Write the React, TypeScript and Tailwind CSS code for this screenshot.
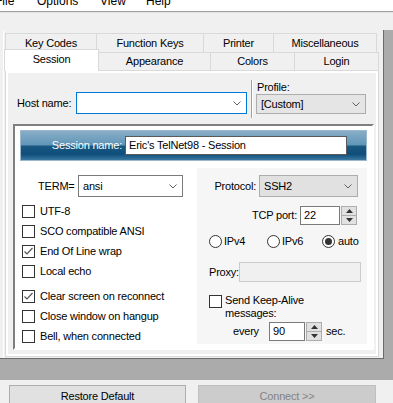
import React from "react";

function Chevron() {
  return (
    <svg width="8" height="5" viewBox="0 0 8 5" className="shrink-0">
      <path d="M0.5 0.5 L4 4 L7.5 0.5" fill="none" stroke="#606060" strokeWidth="1" />
    </svg>
  );
}

function Spinner() {
  return (
    <div className="w-[16px] h-full ml-[1px] flex flex-col border border-[#adadad] bg-[#e1e1e1]">
      <div className="flex-1 flex items-center justify-center border-b border-[#adadad]">
        <svg width="7" height="4" viewBox="0 0 7 4">
          <path d="M0 4 L3.5 0 L7 4 Z" fill="#333" />
        </svg>
      </div>
      <div className="flex-1 flex items-center justify-center">
        <svg width="7" height="4" viewBox="0 0 7 4">
          <path d="M0 0 L3.5 4 L7 0 Z" fill="#333" />
        </svg>
      </div>
    </div>
  );
}

function Check({ on }: { on?: boolean }) {
  return (
    <div className="w-[13px] h-[13px] shrink-0 border border-[#333] bg-white flex items-center justify-center">
      {on && (
        <svg width="11" height="11" viewBox="0 0 11 11">
          <path d="M1.5 5.5 L4 8 L9.5 2" fill="none" stroke="#555" strokeWidth="1.2" />
        </svg>
      )}
    </div>
  );
}

function Radio({ on }: { on?: boolean }) {
  return (
    <div className="w-[13px] h-[13px] shrink-0 rounded-full border border-[#333] bg-white flex items-center justify-center">
      {on && <div className="w-[7px] h-[7px] rounded-full bg-[#333]" />}
    </div>
  );
}

function CheckRow({ label, on }: { label: string; on?: boolean }) {
  return (
    <div className="h-[20px] flex items-center pl-[2px] gap-[5px]">
      <Check on={on} />
      <span>{label}</span>
    </div>
  );
}

export default function App() {
  return (
    <div className="w-[393px] h-[403px] overflow-hidden bg-[#f0f0f0] text-[11px] tracking-[-0.2px] text-black font-['Liberation_Sans',Arial,sans-serif] flex flex-col">
      {/* menu bar, cut off at the top */}
      <div className="h-[11px] bg-white overflow-hidden shrink-0">
        <div className="flex -mt-[5px] text-[12px] leading-[12px] tracking-normal whitespace-nowrap">
          <span className="-ml-[5px] w-[42px] shrink-0">File</span>
          <span className="w-[63px] shrink-0">Options</span>
          <span className="w-[46px] shrink-0">View</span>
          <span>Help</span>
        </div>
      </div>
      <div className="h-px bg-[#a0a0a0] shrink-0" />
      <div className="h-px bg-[#e3e3e3] shrink-0" />
      <div className="h-[17px] shrink-0" />

      <div className="flex h-[328px] shrink-0">
        <div className="w-[384px] border-r border-[#6b6b6b] flex">
          <div className="w-[3px] shrink-0" />
          <div className="w-px bg-white shrink-0" />
          <div className="w-px shrink-0" />

          {/* tab control */}
          <div className="w-[375px] shrink-0 flex flex-col pt-[3px]">
            <div className="flex h-[19px]">
              <div className="w-[91px] border-t border-l border-[#d9d9d9] flex items-center justify-center">Key Codes</div>
              <div className="w-[107px] border-t border-l border-[#d9d9d9] flex items-center justify-center">Function Keys</div>
              <div className="w-[70px] border-t border-l border-[#d9d9d9] flex items-center justify-center">Printer</div>
              <div className="w-[104px] border-t border-l border-r border-[#d9d9d9] flex items-center justify-center">Miscellaneous</div>
            </div>
            <div className="flex h-[18px] relative">
              <div className="relative z-10 -ml-px -mt-[3px] w-[95px] h-[22px] bg-white border-t border-l border-r border-[#d9d9d9] flex items-center justify-center pb-[3px]">
                Session
              </div>
              <div className="w-[112px] border-t border-r border-[#d9d9d9] flex items-center justify-center">Appearance</div>
              <div className="w-[84px] border-t border-r border-[#d9d9d9] flex items-center justify-center">Colors</div>
              <div className="w-[84px] border-t border-r border-[#d9d9d9] flex items-center justify-center">Login</div>
            </div>

            {/* tab page */}
            <div className="w-[374px] h-[287px] border border-[#d9d9d9] bg-white p-[2px]">
              <div className="h-full bg-[#f0f0f0] pt-[7px] flex flex-col">
                {/* host row */}
                <div className="flex h-[38px] ml-[9px]">
                  <div className="flex items-center mt-[12px] h-[22px]">
                    <span className="w-[59px]">Host name:</span>
                    <div className="w-[171px] h-[22px] border border-[#0078d7] bg-white flex items-center justify-end pr-[5px]">
                      <Chevron />
                    </div>
                  </div>
                  <div className="ml-[4px] w-[2px] h-[38px] border-l border-[#a0a0a0] bg-white" />
                  <div className="ml-[3px] flex flex-col">
                    <span className="h-[14px] leading-[14px] pl-[1px]">Profile:</span>
                    <div className="w-[110px] h-[20px] bg-[#e5e5e5] border border-[#adadad] flex items-center justify-between pl-[4px] pr-[5px]">
                      <span>[Custom]</span>
                      <Chevron />
                    </div>
                  </div>
                </div>

                {/* session group */}
                <div className="mt-[6px] ml-[5px] w-[361px] border-2 border-t-[#7f7f7f] border-l-[#7f7f7f] border-r-white border-b-white bg-white px-[5px] pt-[4px] pb-[2px]">
                  <div className="h-[31px] border border-[#9bb8cc] bg-[linear-gradient(180deg,#88aec8_0%,#6196b8_47%,#18577f_53%,#0f4e7a_80%,#3a78a1_100%)] flex items-center justify-end pr-[19px] gap-[3px]">
                    <span className="text-white">Session name:</span>
                    <div className="w-[222px] h-[19px] bg-white border border-[#5a5a5a] flex items-center pl-[3px]">
                      Eric's TelNet98 - Session
                    </div>
                  </div>

                  <div className="flex">
                    {/* left column */}
                    <div className="w-[177px] flex flex-col">
                      <div className="mt-[14px] pl-[18px] flex items-center h-[22px]">
                        <span className="w-[40px]">TERM=</span>
                        <div className="w-[105px] h-[22px] bg-white border border-[#7a7a7a] flex items-center justify-between pl-[4px] pr-[5px]">
                          <span>ansi</span>
                          <Chevron />
                        </div>
                      </div>
                      <div className="mt-[4px]">
                        <CheckRow label="UTF-8" />
                        <CheckRow label="SCO compatible ANSI" />
                        <CheckRow label="End Of Line wrap" on />
                        <CheckRow label="Local echo" />
                      </div>
                      <div className="mt-[5px]">
                        <CheckRow label="Clear screen on reconnect" on />
                        <CheckRow label="Close window on hangup" />
                        <CheckRow label="Bell, when connected" />
                      </div>
                    </div>

                    {/* right panel */}
                    <div className="w-[170px] h-[176px] mt-[7px] bg-[#f6f6f6] flex flex-col">
                      <div className="mt-[7px] h-[22px] flex items-center justify-end pr-[9px] gap-[3px]">
                        <span>Protocol:</span>
                        <div className="w-[99px] h-[22px] bg-[#e1e1e1] border border-[#adadad] flex items-center justify-between pl-[4px] pr-[5px]">
                          <span>SSH2</span>
                          <Chevron />
                        </div>
                      </div>
                      <div className="mt-[9px] h-[19px] flex items-center justify-end pr-[10px]">
                        <span className="mr-[3px]">TCP port:</span>
                        <div className="w-[40px] h-full bg-white border border-[#7a7a7a] flex items-center pl-[3px]">22</div>
                        <Spinner />
                      </div>
                      <div className="mt-[9px] h-[14px] flex items-center pl-[12px]">
                        <div className="w-[58px] flex items-center gap-[2px]">
                          <Radio />
                          <span>IPv4</span>
                        </div>
                        <div className="w-[55px] flex items-center gap-[2px]">
                          <Radio />
                          <span>IPv6</span>
                        </div>
                        <div className="flex items-center gap-[3px]">
                          <Radio on />
                          <span>auto</span>
                        </div>
                      </div>
                      <div className="mt-[14px] h-[20px] flex items-center pl-[12px]">
                        <span className="w-[30px]">Proxy:</span>
                        <div className="w-[122px] h-full bg-[#f0f0f0] border border-[#cccccc]" />
                      </div>
                      <div className="mt-[12px] flex items-start pl-[12px]">
                        <div className="mt-[1px]">
                          <Check />
                        </div>
                        <span className="ml-[3px] leading-[13px]">
                          Send Keep-Alive
                          <br />
                          messages:
                        </span>
                      </div>
                      <div className="mt-[2px] h-[19px] flex items-center pl-[36px]">
                        <span className="w-[36px]">every</span>
                        <div className="w-[36px] h-full bg-white border border-[#7a7a7a] flex items-center pl-[3px]">90</div>
                        <Spinner />
                        <span className="ml-[4px]">sec.</span>
                      </div>
                    </div>
                  </div>
                </div>
              </div>
            </div>
          </div>
        </div>
        <div className="flex-1 bg-[#ababab]" />
      </div>

      <div className="flex h-px shrink-0">
        <div className="w-[384px] bg-[#6b6b6b]" />
        <div className="flex-1 bg-[#ababab]" />
      </div>
      <div className="h-[21px] bg-[#ababab] shrink-0" />

      {/* buttons */}
      <div className="flex pl-[9px] pt-[5px] shrink-0">
        <div className="w-[177px] h-[23px] bg-[#e1e1e1] border border-[#adadad] flex items-center justify-center">
          Restore Default
        </div>
        <div className="ml-[12px] w-[178px] h-[23px] bg-[#cccccc] border border-[#bfbfbf] text-[#838383] flex items-center justify-center">
          Connect &gt;&gt;
        </div>
      </div>
    </div>
  );
}
